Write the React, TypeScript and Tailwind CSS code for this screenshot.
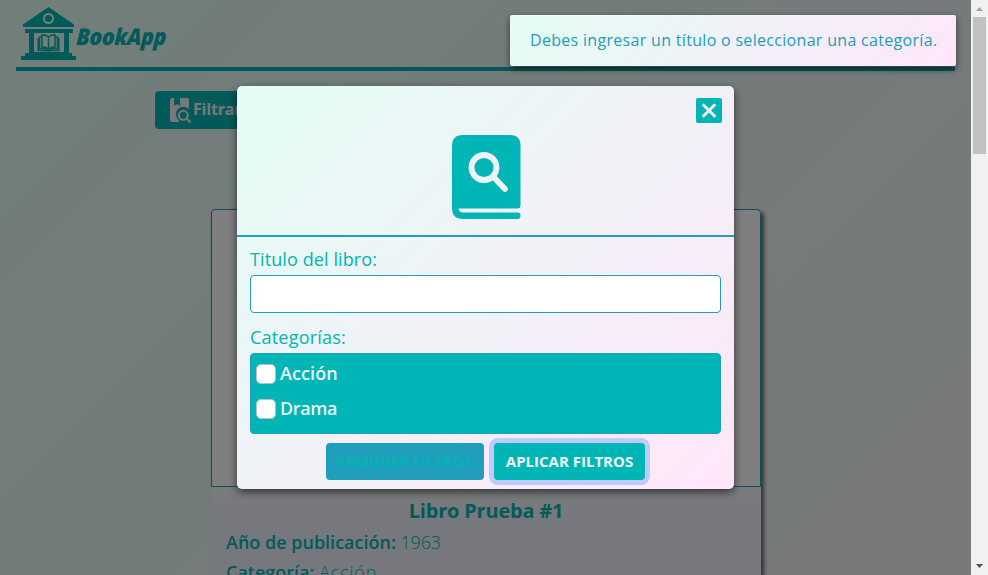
import React from "react";

const soft = "bg-[linear-gradient(135deg,#e3fdf5_0%,#ffe6fa_100%)]";

function LibraryLogo() {
  return (
    <svg className="h-[53px] w-[55px] shrink-0" viewBox="0 0 55 53" fill="#00b5b5">
      <path
        fillRule="evenodd"
        d="M27.5 0 53 17.5V20H2v-2.500ZM27.500 6a5.500 5.500 0 1 0 0 11a5.500 5.500 0 0 0 0-11Zm0 2a3.500 3.500 0 1 1 0 7a3.500 3.500 0 0 1 0-7Z"
      />
      <path
        fillRule="evenodd"
        d="M4 22h48v4h-4v20h3v3h4v4H0v-4h4v-3h4V26H4zM13 26v19h30V26z"
      />
      <g fill="none" stroke="#00b5b5" strokeWidth="1.500">
        <path d="M27.500 30c-2-1.800-4-2.300-6.500-2.300V40c2.500 0 4.500.5 6.500 2 2-1.500 4-2 6.500-2V27.700c-2.500 0-4.500.5-6.500 2.300Zm0 0v12" />
        <path d="M21 30h-2.500v11.500c3.500-.3 6 0 7.500 1.200h3c1.500-1.200 4-1.500 7.500-1.200V30H34" />
        <path d="M17.200 31v12.500h8.300l2 .8 2-.8h8.300V31" />
      </g>
    </svg>
  );
}

function FilterIcon() {
  return (
    <svg className="h-[26px] w-[22px] shrink-0" viewBox="0 0 22 26">
      <path d="M2.500 0H4v8l3-2 3 2V0h7.500Q19 0 19 1.500V11A7 7 0 0 0 8 21.500L10 24H2.500Q0 24 0 21.500v-19Q0 0 2.500 0Z" fill="#f0eff5" />
      <circle cx="13.300" cy="17.300" r="4.500" fill="none" stroke="#f0eff5" strokeWidth="2" />
      <path d="m16.500 20.500 4 4" stroke="#f0eff5" strokeWidth="2.200" />
    </svg>
  );
}

function BookSearchIcon() {
  return (
    <svg className="ml-[2px] h-[84px] w-[69px]" viewBox="0 0 69 84">
      <path
        d="M11 0H58Q68.500 0 68.500 10.500V70Q68.500 73.500 65.500 73.500H6.500Q7 77.500 11 77.500H66Q68.500 77.500 68.500 80.500T66 84H11Q0 84 0 73V11Q0 0 11 0Z"
        fill="#00b5b5"
      />
      <circle cx="32" cy="32.500" r="12.500" fill="none" stroke="#eef3f7" strokeWidth="5.800" />
      <path d="m41.500 42 11.500 12" stroke="#eef3f7" strokeWidth="5.800" strokeLinecap="round" />
    </svg>
  );
}

function Category({ label, track }: { label: string; track: string }) {
  return (
    <label className="flex h-[35px] items-center">
      <span className="h-5 w-5 rounded-[5px] border border-[#bfbfbf] bg-white" />
      <span className={`ml-1 text-[18px] font-semibold text-[#e9fbfa] ${track}`}>{label}</span>
    </label>
  );
}

function Page() {
  return (
    <div className={`h-[2270px] w-[971px] px-4 ${soft}`}>
      <header className="flex h-[71px] border-b-4 border-[#00b5b5] pl-[5px] pt-[7px]">
        <LibraryLogo />
        <span className="mt-[11px] origin-left scale-x-[0.93] -skew-x-3 text-[23px] leading-[36px] font-extrabold italic tracking-[-0.5px] text-[#00b5b5]">
          BookApp
        </span>
      </header>
      <button className="mt-5 ml-[139px] flex h-[38px] w-[116px] rounded bg-[#00b5b5] pl-[15px] pt-[7px] text-[#f0eff5]">
        <FilterIcon />
        <span className="ml-px text-[16px] leading-[22px] font-bold tracking-[-0.2px]">Filtrar</span>
      </button>
      <article className="mt-[80px] ml-[195px] h-[700px] w-[550px] rounded bg-[linear-gradient(180deg,#f3f8f8_278px,#edf0fb_310px)] shadow-[3px_3px_4px_rgba(0,0,0,0.6)]">
        <div className="h-[278px] rounded-t border border-[#219ebc] bg-white" />
        <h2 className="mt-[7px] text-center text-[20px] leading-[34px] font-bold tracking-[-0.2px] text-[#00b5b5]">Libro Prueba #1</h2>
        <p className="-mt-px pl-[15px] text-[18px] leading-[30px] text-[#00b5b5]">
          <b className="font-semibold">Año de publicación:</b> <span className="font-light tracking-[-0.2px]">1963</span>
        </p>
        <p className="pl-[15px] text-[18px] leading-[31px] text-[#00b5b5]">
          <b className="font-semibold">Categoría:</b> <span className="font-light tracking-[0.8px]">Acción</span>
        </p>
      </article>
    </div>
  );
}

export default function App() {
  return (
    <div className="relative flex h-[575px] w-[988px] overflow-hidden font-['Open_Sans','Noto_Sans',sans-serif]">
      <main className="h-[575px] w-[971px] overflow-hidden">
        <Page />
      </main>
      <aside className="flex w-[17px] flex-col items-center justify-between bg-[#f1f1f1]">
        <div className="flex flex-col items-center">
          <svg className="h-[17px] w-[17px]" viewBox="0 0 17 17"><path d="M5 11h7L8.500 7z" fill="#a3a3a3" /></svg>
          <div className="h-[137px] w-[13px] bg-[#c1c1c1]" />
        </div>
        <svg className="h-[17px] w-[17px]" viewBox="0 0 17 17"><path d="M5 6h7l-3.500 4z" fill="#505050" /></svg>
      </aside>
      <div className="absolute inset-y-0 left-0 w-[971px] bg-black/50" />

      <section className={`absolute top-[86px] left-[237px] flex h-[403px] w-[497px] flex-col overflow-hidden rounded-[5px] shadow-[0_3px_9px_rgba(0,0,0,0.6)] ${soft}`}>
        <div className="relative flex h-[151px] justify-center border-b-2 border-[#219ebc] pt-[49px]">
          <BookSearchIcon />
          <button className="absolute top-3 right-3 h-[25px] w-[26px] rounded-[2px] bg-[#00b5b5]">
            <svg className="h-[25px] w-[26px]" viewBox="0 0 26 25">
              <path d="m7.500 7 11 11m0-11-11 11" stroke="#f3f0f7" strokeWidth="3" strokeLinecap="round" />
            </svg>
          </button>
        </div>
        <div className="flex flex-1 flex-col px-[13px] text-[#00b5b5]">
          <label className="mt-[7px] h-[31px] text-[18px] leading-[30px] tracking-[0.1px]">Titulo del libro:</label>
          <input className="h-[38px] rounded border border-[#219ebc] bg-white" />
          <label className="mt-[9px] h-[31px] text-[18px] leading-[30px] tracking-[0.2px]">Categorías:</label>
          <div className="h-[81px] rounded border border-[#219ebc] bg-[#00b5b5] pt-[2px] pl-[5px]">
            <Category label="Acción" track="tracking-[0.1px]" />
            <Category label="Drama" track="tracking-[-0.4px]" />
          </div>
          <div className="mt-[9px] flex justify-center gap-[10px] text-[15px] leading-[22px] font-bold">
            <button className="h-[37px] w-[158px] rounded bg-[#219ebc] pb-[2px] text-[#00b5b5]">REMOVER FILTROS</button>
            <button className="h-[37px] w-[151px] rounded bg-[#00b5b5] pb-[2px] text-[#f0f8fb] shadow-[0_0_0_5px_#bfccfb]">APLICAR FILTROS</button>
          </div>
        </div>
      </section>

      <div className={`absolute top-[15px] left-[510px] h-[51px] w-[446px] rounded-[2px] pl-5 text-[16px] leading-[50px] font-medium tracking-[0.31px] whitespace-nowrap text-[#219ebc] shadow-[0_3px_7px_rgba(0,0,0,0.6)] ${soft}`}>
        Debes ingresar un título o seleccionar una categoría.
      </div>
    </div>
  );
}
